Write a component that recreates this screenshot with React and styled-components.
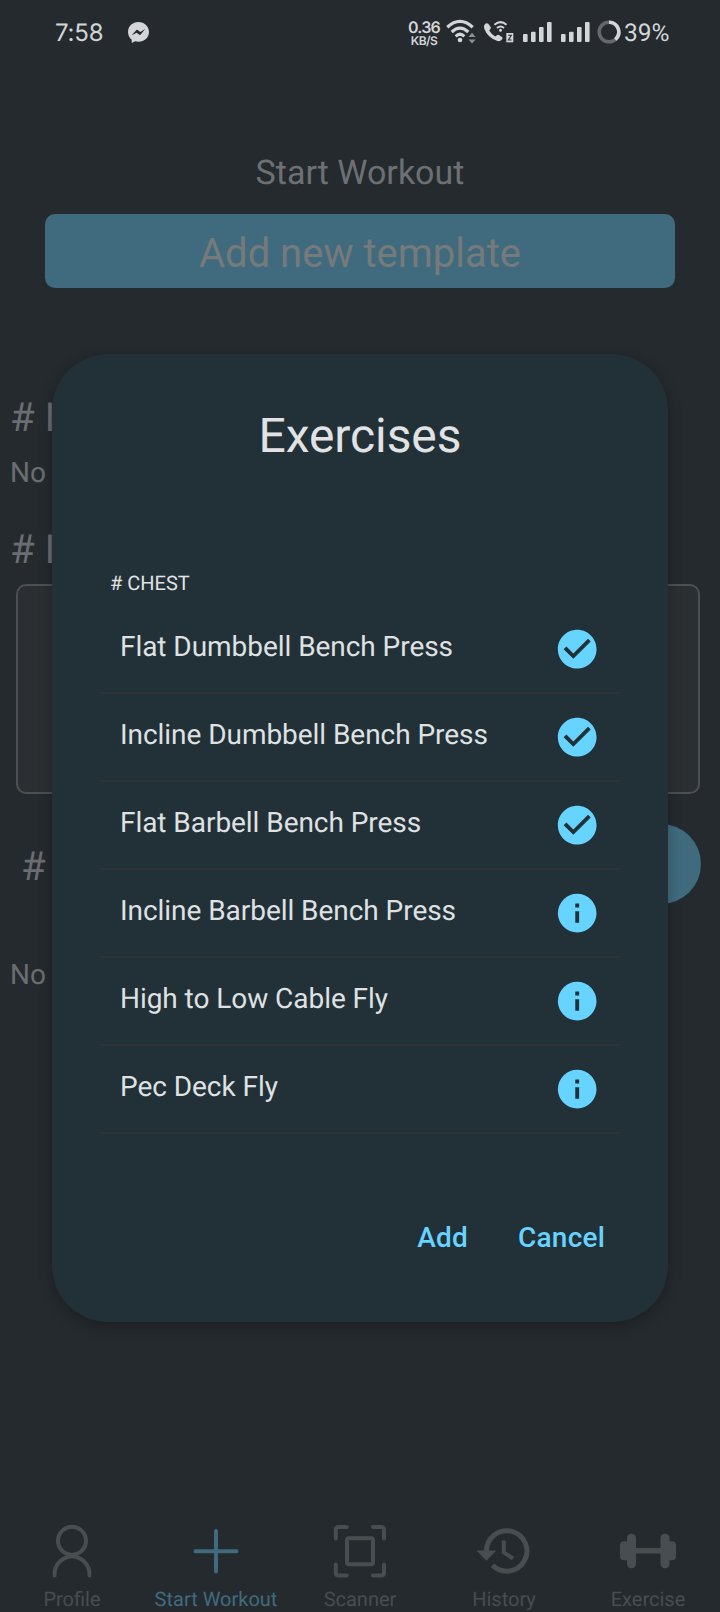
import React from "react";
import styled, { createGlobalStyle } from "styled-components";

const GlobalStyle = createGlobalStyle`
  * { box-sizing: border-box; }
  body {
    margin: 0;
    background: #252a2e;
    font-family: Roboto, "Liberation Sans", sans-serif;
    text-rendering: geometricPrecision;
  }
`;

const Screen = styled.div`
  position: relative;
  display: flex;
  flex-direction: column;
  width: 720px;
  height: 1612px;
  overflow: hidden;
  background: #252a2e;
`;

const StatusBar = styled.header`
  display: flex;
  align-items: flex-start;
  height: 64px;
  padding: 0 49px 0 55px;
  color: #d3d5d7;
  font-family: Inter, Roboto, sans-serif;
`;

const Clock = styled.span`
  width: 49px;
  padding-top: 18px;
  font-size: 24px;
  line-height: 30px;
  letter-spacing: -0.2px;
  white-space: nowrap;
`;

const BatteryLevel = styled.span`
  width: 47px;
  margin-left: 3px;
  padding-top: 18px;
  font-family: Roboto, sans-serif;
  font-size: 24.5px;
  line-height: 30px;
  white-space: nowrap;
`;

const StatusIcon = styled.svg`
  display: block;
  flex: none;
  margin-top: ${(p) => p.$top}px;
  margin-left: ${(p) => p.$left}px;
`;

const Speed = styled.div`
  display: flex;
  flex-direction: column;
  align-items: center;
  width: 34px;
  margin-left: auto;
  padding-top: 20px;
  font-weight: 600;
`;

const SpeedValue = styled.span`
  font-size: 16px;
  line-height: 15px;
  letter-spacing: -0.8px;
`;

const SpeedUnit = styled.span`
  font-size: 12px;
  line-height: 11px;
  letter-spacing: -0.6px;
`;

const PageTitle = styled.h1`
  margin: 89px 0 0;
  font-size: 34px;
  line-height: 40px;
  font-weight: 400;
  text-align: center;
  color: #6d7073;
`;

const TemplateButton = styled.button`
  height: 74px;
  margin: 21px 45px 0;
  padding: 6px 0 0;
  border: 0;
  border-radius: 10px;
  background: #406b7e;
  color: #767a7b;
  font: 400 40px/48px Roboto, sans-serif;
`;

const SectionHeading = styled.h2`
  margin: ${(p) => p.$top || 0}px 0 0;
  padding-left: 10px;
  font-size: 40px;
  line-height: 48px;
  font-weight: 400;
  color: #6b6e71;
`;

const EmptyNote = styled.p`
  margin: ${(p) => p.$top}px 0 0;
  padding-left: 10px;
  font-size: 28px;
  line-height: 36px;
  color: #6b6e71;
`;

const TemplateCard = styled.div`
  height: 210px;
  margin: 10px 20px 0 16px;
  border: 2px solid #4b5056;
  border-radius: 10px;
  background: #2b2f31;
`;

const SectionRow = styled.div`
  display: flex;
  align-items: center;
  justify-content: space-between;
  height: 80px;
  margin-top: 30px;
  padding: 0 19px 0 11px;
`;

const RoundButton = styled.div`
  width: 80px;
  height: 80px;
  border-radius: 50%;
  background: #406b7e;
`;

const TabBar = styled.nav`
  display: grid;
  grid-template-columns: repeat(5, 1fr);
  margin-top: auto;
  padding-bottom: 1px;
`;

const Tab = styled.div`
  display: flex;
  flex-direction: column;
  align-items: center;
  color: ${(p) => (p.$active ? "#406b7e" : "#484d50")};
`;

const TabIcon = styled.svg`
  display: block;
  width: 60px;
  height: 60px;
`;

const TabLabel = styled.span`
  margin-top: 4px;
  font-size: 20px;
  line-height: 24px;
  white-space: nowrap;
`;

const Overlay = styled.div`
  position: absolute;
  inset: 0;
  padding: 354px 52px 0;
`;

const Dialog = styled.section`
  display: flex;
  flex-direction: column;
  height: 968px;
  padding: 54px 48px 0;
  border-radius: 56px;
  background: #223037;
  box-shadow: 0 4px 14px rgba(0, 0, 0, 0.28);
`;

const DialogTitle = styled.h2`
  margin: 0;
  font-size: 48px;
  line-height: 56px;
  font-weight: 400;
  letter-spacing: -0.1px;
  text-align: center;
  color: #e1e2e4;
`;

const GroupLabel = styled.h3`
  margin: 107px 0 11px;
  padding-left: 10px;
  font-size: 20px;
  line-height: 24px;
  font-weight: 400;
  color: #e1e2e4;
`;

const List = styled.ul`
  margin: 0;
  padding: 0;
  list-style: none;
`;

const Row = styled.li`
  display: flex;
  align-items: center;
  justify-content: space-between;
  height: 88px;
  padding: 0 20px;
  border-bottom: 2px solid #303335;
`;

const RowName = styled.span`
  padding-bottom: 5px;
  font-size: 28px;
  line-height: 36px;
  letter-spacing: -0.05px;
  color: #dfe1e2;
`;

const RowIcon = styled.svg`
  display: block;
  width: 46.4px;
  height: 46.4px;
  fill: #67d3ff;
`;

const Actions = styled.div`
  display: flex;
  justify-content: flex-end;
  gap: 50px;
  margin-top: 86px;
  padding-right: 15px;
`;

const Action = styled.button`
  padding: 0;
  border: 0;
  background: none;
  color: #67d3ff;
  font: 500 28px/36px Roboto, sans-serif;
  letter-spacing: 0.2px;
`;

const exercises = [
  { name: "Flat Dumbbell Bench Press", selected: true },
  { name: "Incline Dumbbell Bench Press", selected: true },
  { name: "Flat Barbell Bench Press", selected: true },
  { name: "Incline Barbell Bench Press" },
  { name: "High to Low Cable Fly" },
  { name: "Pec Deck Fly" },
];

const CHECK =
  "M12 2C6.5 2 2 6.5 2 12S6.5 22 12 22 22 17.5 22 12 17.5 2 12 2M10 17L5 12L6.41 10.59L10 14.17L17.59 6.58L19 8L10 17Z";
const INFO =
  "M13 9H11V7H13M13 17H11V11H13M12 2A10 10 0 0 0 2 12A10 10 0 0 0 12 22A10 10 0 0 0 22 12A10 10 0 0 0 12 2Z";

const line = { fill: "none", stroke: "currentColor", strokeWidth: 4, strokeLinecap: "round", strokeLinejoin: "round" };

const tabs = [
  {
    label: "Profile",
    icon: (
      <g {...line}>
        <circle cx="30" cy="17.700" r="14" />
        <path d="M12.600 52.500V51a17.400 17.500 0 0 1 34.800 0v1.500" />
      </g>
    ),
  },
  { label: "Start Workout", active: true, icon: <path {...line} d="M30 8V48.500M9.500 28.300H50.500" /> },
  {
    label: "Scanner",
    icon: (
      <g {...line}>
        <path d="M5.800 15.500V7Q5.800 4 8.800 4H16.700M43 4H51Q54 4 54 7V15.500M54 41.500V49.500Q54 52.500 51 52.500H43M16.700 52.500H8.800Q5.800 52.500 5.800 49.500V41.500" />
        <rect x="17" y="15.300" width="26" height="26" rx="2" />
      </g>
    ),
  },
  {
    label: "History",
    icon: (
      <g fill="none" stroke="currentColor" strokeWidth="5">
        <path d="M12.500 29V28A20.200 20.200 0 1 1 18.500 42.300" />
        <path d="M29.800 17.500V29.500L39 35.500" strokeWidth="4" />
        <path d="M2.500 27.500H22.300L12.400 37.800Z" fill="currentColor" stroke="none" />
      </g>
    ),
  },
  {
    label: "Exercise",
    icon: (
      <g fill="currentColor">
        <rect x="2" y="18.300" width="11" height="19" rx="4" />
        <rect x="9" y="10.700" width="9" height="34.500" rx="4.200" />
        <rect x="15" y="25" width="30" height="5.500" />
        <rect x="42.500" y="10.700" width="9" height="34.500" rx="4.200" />
        <rect x="47" y="18.300" width="11" height="19" rx="4" />
      </g>
    ),
  },
];

function Signal({ left }) {
  return (
    <StatusIcon width="30" height="21" viewBox="0 0 30 21" fill="#d3d5d7" $top={22} $left={left}>
      <rect x="0" y="12" width="4.600" height="8" rx="1" />
      <rect x="8" y="9.800" width="4.600" height="10.200" rx="1" />
      <rect x="16" y="5" width="4.600" height="15" rx="1" />
      <rect x="24" y="0" width="4.600" height="20" rx="1" />
    </StatusIcon>
  );
}

export default function App() {
  return (
    <Screen>
      <GlobalStyle />
      <StatusBar>
        <Clock>7:58</Clock>
        <StatusIcon width="21" height="21" viewBox="0 0 21 21" $top={22} $left={24}>
          <path fill="#d3d5d7" d="M10.500 0C4.500 0 0 4.300 0 10c0 3.200 1.400 5.900 3.700 7.700V21l3.500-1.700c1 .3 2.100.4 3.300.4C16.500 19.700 21 15.500 21 10S16.500 0 10.500 0Z" />
          <path fill="#252a2e" d="M3.800 13.200 8.400 7.900Q9 7.400 9.700 7.900L12.300 10 17.200 7 12.700 12.600Q12.100 13.200 11.400 12.700L8.600 10.700Z" />
        </StatusIcon>
        <Speed>
          <SpeedValue>0.36</SpeedValue>
          <SpeedUnit>KB/S</SpeedUnit>
        </Speed>
        <StatusIcon width="31" height="25" viewBox="0 0 31 25" $top={19} $left={5}>
          <g fill="none" stroke="#d3d5d7" strokeWidth="3.200">
            <path d="M1.300 8.200Q14 -3.500 26.700 8.200" />
            <path d="M5.700 13Q14 5.200 22.300 13" />
            <path d="M9.700 17.300Q14 13.300 18.300 17.300" />
          </g>
          <circle cx="14" cy="21" r="2.300" fill="#d3d5d7" />
          <path d="M22.500 18 26 13.700 29.700 18ZM22.500 20.500 26 24.500 29.700 20.500Z" fill="#8c8f91" />
        </StatusIcon>
        <StatusIcon width="31" height="24" viewBox="0 0 31 24" $top={19} $left={6}>
          <path d="M1.500 5.800Q3.300 3.500 5.300 4.800L7.800 8.300Q8.300 9.600 6.200 11.500Q8.600 15.500 12.300 17.500L14.300 15.900Q15 15.400 16 16L19.300 18.200Q20 19.200 18.700 20.800Q17.300 22.600 14.500 22Q4.500 18.800 1.200 9.500Q.6 7.400 1.500 5.800Z" fill="#d3d5d7" />
          <g fill="none" stroke="#d3d5d7" strokeWidth="2">
            <path d="M11.500 5.800Q17.500 .5 23.500 5.800" />
            <path d="M14 9Q17.500 6 21 9" />
          </g>
          <circle cx="17.500" cy="11.200" r="1.500" fill="#d3d5d7" />
          <rect x="23.300" y="14" width="7" height="9.300" fill="#d3d5d7" />
          <path d="M25.200 16.300H28.300L25.400 21H28.600" fill="none" stroke="#252a2e" strokeWidth="1.100" />
        </StatusIcon>
        <Signal left={9} />
        <Signal left={8} />
        <StatusIcon width="24" height="24" viewBox="0 0 24 24" fill="none" strokeWidth="3.500" $top={20} $left={6}>
          <circle cx="12" cy="12" r="9.800" stroke="#66696c" />
          <path d="M12 2.200A9.800 9.800 0 0 1 18.300 19.500" stroke="#d3d5d7" />
        </StatusIcon>
        <BatteryLevel>39%</BatteryLevel>
      </StatusBar>

      <PageTitle>Start Workout</PageTitle>
      <TemplateButton>Add new template</TemplateButton>
      <SectionHeading $top={106}># I</SectionHeading>
      <EmptyNote $top={13}>No</EmptyNote>
      <SectionHeading $top={35}># I</SectionHeading>
      <TemplateCard />
      <SectionRow>
        <SectionHeading $top={5}>#</SectionHeading>
        <RoundButton />
      </SectionRow>
      <EmptyNote $top={53}>No</EmptyNote>

      <TabBar>
        {tabs.map((t) => (
          <Tab key={t.label} $active={t.active}>
            <TabIcon viewBox="0 0 60 60">{t.icon}</TabIcon>
            <TabLabel>{t.label}</TabLabel>
          </Tab>
        ))}
      </TabBar>

      <Overlay>
        <Dialog>
          <DialogTitle>Exercises</DialogTitle>
          <GroupLabel># CHEST</GroupLabel>
          <List>
            {exercises.map((e) => (
              <Row key={e.name}>
                <RowName>{e.name}</RowName>
                <RowIcon viewBox="0 0 24 24">
                  <path fillRule="evenodd" d={e.selected ? CHECK : INFO} />
                </RowIcon>
              </Row>
            ))}
          </List>
          <Actions>
            <Action>Add</Action>
            <Action>Cancel</Action>
          </Actions>
        </Dialog>
      </Overlay>
    </Screen>
  );
}
